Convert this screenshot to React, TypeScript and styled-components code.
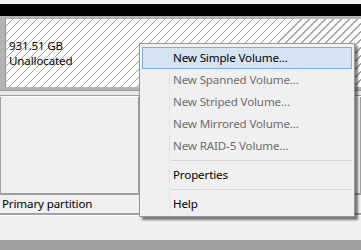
import styled, { createGlobalStyle } from "styled-components"

const Global = createGlobalStyle`
    html, body {
        margin: 0;
        padding: 0;
        background: #f0f0f0;
    }
    body {
        font-family: "Noto Sans", "Open Sans", sans-serif;
        font-size: 11.6px;
        letter-spacing: -0.15px;
    }
`

type Item = { label: string; disabled?: boolean; active?: boolean; sep?: boolean }

const items: Item[] = [
    { label: "New Simple Volume...", active: true },
    { label: "New Spanned Volume...", disabled: true },
    { label: "New Striped Volume...", disabled: true },
    { label: "New Mirrored Volume...", disabled: true },
    { label: "New RAID-5 Volume...", disabled: true },
    { label: "", sep: true },
    { label: "Properties" },
    { label: "", sep: true },
    { label: "Help" },
]

const App = () => {
    return (
        <Screen>
            <Global />
            <TopStrip />
            <BlackBar />
            <DiskRow>
                <Hatch>
                    <div>931.51 GB</div>
                    <div>Unallocated</div>
                </Hatch>
            </DiskRow>
            <Rule />
            <Columns>
                <Column>
                    <PanelBox />
                    <Caption>Primary partition</Caption>
                </Column>
                <Column $wide>
                    <PanelBox />
                    <Caption></Caption>
                </Column>
            </Columns>
            <Footer />
            <StatusBar />

            <Menu>
                {items.map((it, i) =>
                    it.sep ? (
                        <Sep key={i}>
                            <Gutter />
                            <span />
                        </Sep>
                    ) : (
                        <MenuItem key={i} $active={it.active} $disabled={it.disabled}>
                            <Gutter $active={it.active} />
                            <Label>{it.label}</Label>
                        </MenuItem>
                    )
                )}
            </Menu>
        </Screen>
    )
}

export default App

const Screen = styled.div`
    position: relative;
    width: 361px;
    height: 250px;
    overflow: hidden;
    background: #f0f0f0;
    display: flex;
    flex-direction: column;
`

const TopStrip = styled.div`
    height: 4px;
    background: #f3f3f3;
`

const BlackBar = styled.div`
    height: 12px;
    background: #000;
    border-bottom: 3px solid #b4b4b4;
`

const DiskRow = styled.div`
    display: flex;
    height: 68px;
    padding-left: 5px;
    background: #b4b4b4;
    border-bottom: 3px solid #b4b4b4;
`

const Hatch = styled.div`
    flex: 1;
    border-left: 1px solid #9a9a9a;
    padding: 19px 0 0 3px;
    color: #000;
    line-height: 15px;
    background-color: #fff;
    background-image: repeating-linear-gradient(
        -45deg,
        #fff 0px,
        #fff 4.9px,
        #a4a4a4 4.9px,
        #a4a4a4 5.66px
    );
`

const Rule = styled.div`
    height: 4px;
    border-top: 1px solid #9a9a9a;
    border-bottom: 1px solid #a0a0a0;
    background: #e6e6e6;
    box-shadow: 0 1px 0 #fff;
    margin-bottom: 1px;
`

const Columns = styled.div`
    display: flex;
`

const Column = styled.div<{ $wide?: boolean }>`
    display: flex;
    flex-direction: column;
    width: ${p => (p.$wide ? "auto" : "139px")};
    flex: ${p => (p.$wide ? 1 : "none")};
`

const PanelBox = styled.div`
    height: 96px;
    border-left: 1px solid #a0a0a0;
    border-right: 1px solid #a0a0a0;
    border-bottom: 2px solid #a0a0a0;
    background: #f0f0f0;
`

const Caption = styled.div`
    height: 18px;
    padding-left: 2px;
    line-height: 18px;
    color: #000;
    background: #f0f0f0;
    border-bottom: 2px solid #a0a0a0;
    box-shadow: 0 1px 0 #fff;
`

const Footer = styled.div`
    flex: 1;
    margin-top: 1px;
    background: #f0f0f0;
`

const StatusBar = styled.div`
    height: 10px;
    background: #a0a0a0;
`

const Menu = styled.div`
    position: absolute;
    left: 139px;
    top: 43px;
    width: 210px;
    padding: 3px 2px 1px 2px;
    background: #f0f0f0;
    border: 1px solid #979797;
    box-shadow: 3px 3px 2px rgba(0, 0, 0, 0.5);
    display: flex;
    flex-direction: column;
`

const MenuItem = styled.div<{ $active?: boolean; $disabled?: boolean }>`
    display: flex;
    align-items: center;
    height: 22px;
    box-sizing: border-box;
    color: ${p => (p.$disabled ? "#6d6d6d" : "#000")};
    background: ${p => (p.$active ? "#d5e4f2" : "transparent")};
    border: 1px solid ${p => (p.$active ? "#7eb1e5" : "transparent")};
`

const Gutter = styled.div<{ $active?: boolean }>`
    width: 26px;
    align-self: stretch;
    flex: none;
    border-right: 1px solid ${p => (p.$active ? "transparent" : "#e2e2e2")};
    margin-right: 3px;
`

const Label = styled.div`
    white-space: nowrap;
    line-height: 20px;
`

const Sep = styled.div`
    display: flex;
    height: 7px;
    align-items: center;
    padding-left: 1px;

    span {
        display: block;
        margin-left: -2px;
        flex: 1;
        height: 1px;
        background: #d7d7d7;
    }
`
